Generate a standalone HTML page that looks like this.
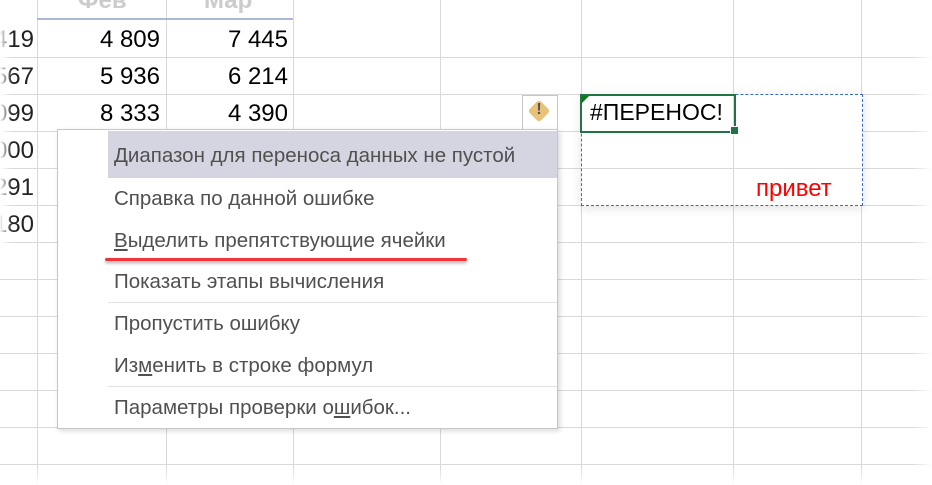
<!DOCTYPE html>
<html><head><meta charset="utf-8"><style>
body{margin:0;width:932px;height:485px;overflow:hidden;background:#fff;font-family:"Liberation Sans","DejaVu Sans",sans-serif;position:relative}
.v{position:absolute;top:0;height:485px;width:1px;background:#d9d9d9}
.h{position:absolute;left:0;width:932px;height:1px;background:#d9d9d9}
.n{position:absolute;font-size:24px;color:#000;text-align:right;white-space:nowrap}
.g{color:#222}
.menu{position:absolute;left:57px;top:129px;width:499px;height:298px;background:#fff;border:1px solid #c6c6c6;box-shadow:2px 2px 5px rgba(0,0,0,.15)}
.it{position:absolute;left:56px;font-size:20.5px;color:#505050;white-space:nowrap}
.sep{position:absolute;left:50px;width:449px;height:1px;background:#e2e2e2}
</style></head><body>
<div class="v" style="left:37px"></div><div class="v" style="left:166px"></div><div class="v" style="left:293px"></div><div class="v" style="left:440px"></div><div class="v" style="left:581px"></div><div class="v" style="left:733px"></div><div class="v" style="left:861px"></div>
<div class="h" style="top:57px"></div><div class="h" style="top:94px"></div><div class="h" style="top:131px"></div><div class="h" style="top:168px"></div><div class="h" style="top:205px"></div><div class="h" style="top:242px"></div><div class="h" style="top:279px"></div><div class="h" style="top:316px"></div><div class="h" style="top:353px"></div><div class="h" style="top:390px"></div><div class="h" style="top:427px"></div><div class="h" style="top:464px"></div>
<div style="position:absolute;left:37px;top:18px;width:256px;height:2px;background:#a9b8d8"></div>
<div style="position:absolute;left:78px;top:-13px;font-size:24px;font-weight:bold;color:#ccc">Фев</div>
<div style="position:absolute;left:204px;top:-13px;font-size:24px;font-weight:bold;color:#ccc">Мар</div>
<div class="n g" style="right:898px;top:26px">419</div>
<div class="n g" style="right:898px;top:63px">567</div>
<div class="n g" style="right:898px;top:100px">099</div>
<div class="n g" style="right:898px;top:137px">000</div>
<div class="n g" style="right:898px;top:174px">291</div>
<div class="n g" style="right:898px;top:211px">180</div>
<div style="position:absolute;left:0;top:0;width:12px;height:250px;background:linear-gradient(to right,#fff,rgba(255,255,255,0))"></div>
<div class="n" style="left:60px;width:100px;top:26px">4 809</div>
<div class="n" style="left:187px;width:101px;top:26px">7 445</div>
<div class="n" style="left:60px;width:100px;top:63px">5 936</div>
<div class="n" style="left:187px;width:101px;top:63px">6 214</div>
<div class="n" style="left:60px;width:100px;top:100px">8 333</div>
<div class="n" style="left:187px;width:101px;top:100px">4 390</div>
<div style="position:absolute;left:581px;top:94px;width:280px;height:110px;border:1px dashed #3a6bc4;box-shadow:0 2px 10px rgba(0,0,0,.12);background:#fff"></div>
<div class="v" style="left:733px;top:95px;height:110px"></div>
<div class="h" style="left:582px;width:279px;top:168px"></div>
<div style="position:absolute;left:580px;top:94px;width:152px;height:35px;border:2px solid #217346"></div>
<div style="position:absolute;left:730px;top:126px;width:7px;height:7px;background:#217346;border:1px solid #fff"></div>
<div style="position:absolute;left:582px;top:96px;width:0;height:0;border-top:7px solid #0a7a1a;border-right:7px solid transparent"></div>
<div style="position:absolute;left:590px;top:99px;font-size:23px">#ПЕРЕНОС!</div>
<div style="position:absolute;left:756px;top:175px;font-size:24px;color:#f00">привет</div>
<div style="position:absolute;left:522px;top:95px;width:34px;height:33px;border:1px solid #c6c6c6;background:#fff"></div>
<div style="position:absolute;left:531px;top:103px;width:16px;height:16px;background:#e9c27a;transform:rotate(45deg);border-radius:3px"></div>
<div style="position:absolute;left:532px;top:101px;width:14px;text-align:center;font-size:16px;font-weight:bold;color:#555">!</div>
<div class="menu">
<div style="position:absolute;left:50px;top:1px;width:449px;height:47px;background:#d5d5e1"></div>
<div class="it" style="top:14px">Диапазон для переноса данных не пустой</div>
<div class="it" style="top:57px">Справка по данной ошибке</div>
<div class="it" style="top:99px"><u>В</u>ыделить препятствующие ячейки</div>
<div class="it" style="top:140px">Показать этапы вычисления</div>
<div class="sep" style="top:172px"></div>
<div class="it" style="top:182px">Пропустить ошибку</div>
<div class="it" style="top:224px">Из<u>м</u>енить в строке формул</div>
<div class="sep" style="top:256px"></div>
<div class="it" style="top:266px">Параметры проверки о<u>ш</u>ибок...</div>
</div>
<div style="position:absolute;left:105px;top:258px;width:362px;height:3px;background:#f0343c;border-radius:2px;box-shadow:0 2px 3px rgba(0,0,0,.35)"></div>
<div style="position:absolute;right:0;top:0;width:20px;height:485px;background:linear-gradient(to right,rgba(255,255,255,0),#fff)"></div>
<div style="position:absolute;left:0;bottom:0;width:932px;height:18px;background:linear-gradient(to bottom,rgba(255,255,255,0),#fff)"></div>
</body></html>
